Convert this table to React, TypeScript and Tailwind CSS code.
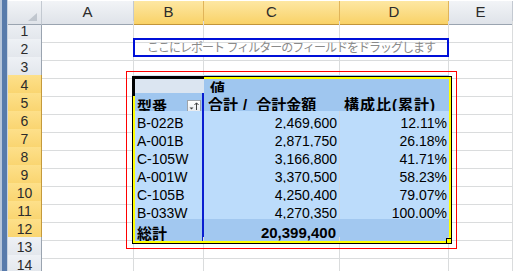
import React from "react";

const COLS = "grid grid-cols-[34px_92px_70px_136px_109px_1fr]";
const FONT = { fontFamily: '"Liberation Sans","Noto Sans CJK JP",sans-serif' };

function Empty() {
  return <div className="border-r border-b border-[#dadcdd]" />;
}

function RowHead({ n, sel }: { n: number; sel: boolean }) {
  return (
    <div
      className={
        sel
          ? "flex items-center justify-center border-r border-b border-r-[#c49a3c] border-b-[#e2b65a] bg-gradient-to-b from-[#fde08a] to-[#f9d36c] text-[14px] text-[#2b2b2b]"
          : "flex items-center justify-center border-r border-b border-r-[#9aa4b0] border-b-[#c5cbd3] bg-gradient-to-b from-[#eef1f5] to-[#e1e5eb] text-[14px] text-[#2b2b2b]"
      }
    >
      {n}
    </div>
  );
}

function Row({ n, sel = false, children }: { n: number; sel?: boolean; children?: React.ReactNode }) {
  return (
    <div className={`${COLS} h-[18px]`}>
      <RowHead n={n} sel={sel} />
      <Empty />
      {children ?? (
        <>
          <Empty />
          <Empty />
          <Empty />
        </>
      )}
      <Empty />
    </div>
  );
}

function ColHead({ label, sel }: { label: string; sel: boolean }) {
  return (
    <div
      className={
        sel
          ? "flex items-center justify-center border-r border-b border-r-[#e0b45a] border-b-[#c2953a] bg-gradient-to-b from-[#fde7a2] to-[#f9d266] text-[15px] text-[#2b2b2b]"
          : "flex items-center justify-center border-r border-b border-r-[#c3c9d1] border-b-[#9aa4b0] bg-gradient-to-b from-[#f2f4f7] to-[#dfe3e9] text-[15px] text-[#2b2b2b]"
      }
    >
      {label}
    </div>
  );
}

const data = [
  ["B-022B", "2,469,600", "12.11%"],
  ["A-001B", "2,871,750", "26.18%"],
  ["C-105W", "3,166,800", "41.71%"],
  ["A-001W", "3,370,500", "58.23%"],
  ["C-105B", "4,250,400", "79.07%"],
  ["B-033W", "4,270,350", "100.00%"],
];

function FilterButton() {
  return (
    <div className="w-[14px] h-[13px] mb-[2px] mr-[1px] border border-[#9ea4ab] bg-gradient-to-b from-white to-[#e6e9ed] flex items-center justify-center">
      <svg width="12" height="11" viewBox="0 0 12 11">
        <path d="M1.5 6.5 L5.5 6.5 L3.5 8.5 Z" fill="#404040" />
        <path d="M8.5 2 L8.5 9" stroke="#404040" strokeWidth="1" />
        <path d="M6.5 4 L8.5 1.8 L10.5 4" stroke="#404040" strokeWidth="1" fill="none" />
      </svg>
    </div>
  );
}

export default function App() {
  return (
    <div className="relative w-[513px] h-[271px] overflow-hidden bg-white flex" style={FONT}>
      {/* window frame strip */}
      <div className="w-[8px] flex shrink-0">
        <div className="w-[2px] bg-[#b7c6da]" />
        <div className="w-[5px] bg-[#587bab]" />
        <div className="w-[1px] bg-[#c9d4e2]" />
      </div>
      <div className="flex-1 flex flex-col">
        <div className="h-[4px] bg-[#d7dde6] border-b border-white" />
        <div className={`${COLS} h-[20px]`}>
          <div className="relative border-r border-b border-r-[#c3c9d1] border-b-[#9aa4b0] bg-gradient-to-b from-[#f2f4f7] to-[#dfe3e9] flex items-end justify-end pr-[4px] pb-[3px]">
            <svg width="9" height="8" viewBox="0 0 9 8">
              <path d="M9 0 L9 8 L0 8 Z" fill="#c0c6ce" />
            </svg>
          </div>
          <ColHead label="A" sel={false} />
          <ColHead label="B" sel />
          <ColHead label="C" sel />
          <ColHead label="D" sel />
          <ColHead label="E" sel={false} />
        </div>
        <Row n={1} />
        <Row n={2}>
          <div className="col-span-3 border-b border-[#dadcdd]">
            <div className="-mt-px -ml-px h-[19px] border-2 border-[#0010d8] flex items-center justify-center text-[12px] tracking-[-1px] text-[#8a8a8a] leading-none">
              ここにレポート フィルターのフィールドをドラッグします
            </div>
          </div>
        </Row>
        <Row n={3} />
        <Row n={4} sel>
          <div className="bg-[#dbe5f1] border-b border-[#2a3fc4]" />
          <div className="col-span-2 bg-[#9fc6ef] flex items-end pl-[6px] text-[15px] font-bold leading-[16px] text-black">
            値
          </div>
        </Row>
        <Row n={5} sel>
          <div className="bg-[#9fc6ef] border-r-2 border-[#0a1ed0] flex items-end justify-between pl-[3px] text-[15px] font-bold leading-[17px] text-black">
            <span>型番</span>
            <FilterButton />
          </div>
          <div className="bg-[#9fc6ef] border-b-2 border-[#0a1ed0] flex items-end pl-[4px] text-[15px] font-bold leading-[16px] text-black whitespace-pre">
            <span>合計</span>
            <span className="ml-[5px] mr-[9px]">/</span>
            <span>合計金額</span>
          </div>
          <div className="bg-[#9fc6ef] border-b-2 border-[#0a1ed0] flex items-end pl-[4px] text-[15px] font-bold leading-[16px] tracking-[1px] text-black whitespace-pre">
            構成比(累計)
          </div>
        </Row>
        {data.map((d, i) => (
          <Row key={i} n={6 + i} sel>
            <div
              className={`bg-[#bcdcfb] border-r-2 border-r-[#0a1ed0] border-b flex items-end pl-[3px] pb-[1px] text-[14px] leading-[15px] text-black ${
                i === 5 ? "border-b-[#7fb0e6]" : "border-b-[#cfd6de]"
              }`}
            >
              {d[0]}
            </div>
            <div
              className={`bg-[#bcdcfb] border-r border-r-[#cfd6de] border-b flex items-end justify-end pr-[2px] pb-[1px] text-[14px] leading-[15px] text-black ${
                i === 5 ? "border-b-[#7fb0e6]" : "border-b-[#cfd6de]"
              }`}
            >
              {d[1]}
            </div>
            <div
              className={`bg-[#bcdcfb] border-b flex items-end justify-end pr-[2px] pb-[1px] text-[14px] leading-[15px] text-black ${
                i === 5 ? "border-b-[#7fb0e6]" : "border-b-[#cfd6de]"
              }`}
            >
              {d[2]}
            </div>
          </Row>
        ))}
        <Row n={12} sel>
          <div className="bg-[#a2c8f0] border-r-2 border-[#0a1ed0] flex items-end pl-[3px] text-[15px] font-bold leading-[15px] text-black">
            総計
          </div>
          <div className="bg-[#a2c8f0] flex items-end justify-end pr-[4px] pb-[1px] text-[15px] font-bold leading-[15px] text-black">
            20,399,400
          </div>
          <div className="bg-[#a2c8f0]" />
        </Row>
        <Row n={13} />
        <Row n={14} />
      </div>

      {/* selection border around pivot */}
      <div className="absolute left-[132px] top-[76px] w-[320px] h-[168px] border border-black pointer-events-none">
        <div className="w-full h-full border-2 border-[#ffff00]" />
      </div>
      {/* active cell B4 */}
      <div className="absolute left-[132px] top-[76px] w-[72px] h-[20px] border-t-[3px] border-l-[3px] border-black pointer-events-none" />
      {/* fill handle */}
      <div className="absolute left-[446px] top-[238px] w-[6px] h-[6px] bg-black p-[1px] pointer-events-none">
        <div className="w-full h-full bg-[#ffff00]" />
      </div>
      {/* red highlight box */}
      <div className="absolute left-[126px] top-[71px] w-[331px] h-[178px] border border-[#ff0000] pointer-events-none" />
    </div>
  );
}
